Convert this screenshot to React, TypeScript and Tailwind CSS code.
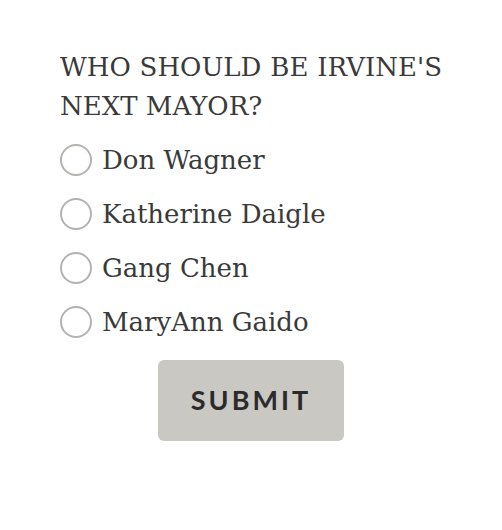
import React from "react";

const options = ["Don Wagner", "Katherine Daigle", "Gang Chen", "MaryAnn Gaido"];

export default function App() {
  return (
    <div className="w-[502px] h-[530px] bg-white">
      <div className="pt-[48px] px-[60px]">
        <h2
          className="text-[26px] leading-[39px] text-[#3a3a3a] text-justify font-normal"
          style={{ fontFamily: '"DejaVu Serif", serif' }}
        >
          WHO SHOULD BE IRVINE'S NEXT MAYOR?
        </h2>
        <div className="flex flex-col mt-[7px]">
          {options.map((o) => (
            <label key={o} className="flex items-center h-[54px] gap-[10px]">
              <span className="w-[32px] h-[32px] rounded-full border-2 border-[#b5b3b0] bg-white shrink-0" />
              <span
                className="text-[26px] text-[#3a3a3a]"
                style={{ fontFamily: '"DejaVu Serif", serif' }}
              >
                {o}
              </span>
            </label>
          ))}
        </div>
      </div>
      <div className="flex justify-center mt-[11px]">
        <button
          className="w-[186px] h-[81px] rounded-[6px] bg-[#cac8c3] text-[#2b2b2b] font-bold text-[27px] tracking-[3px]"
          style={{ fontFamily: "Lato, sans-serif" }}
        >
          SUBMIT
        </button>
      </div>
    </div>
  );
}
